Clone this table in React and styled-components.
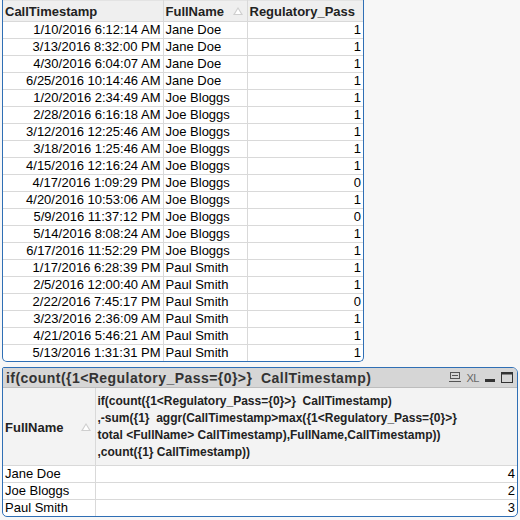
import React from 'react';
import styled, { createGlobalStyle } from 'styled-components';

const GlobalStyle = createGlobalStyle`
  html, body {
    margin: 0;
    padding: 0;
    background: #f7f7f7;
  }
  body {
    font-family: 'Liberation Sans', Arial, sans-serif;
    font-size: 13px;
    color: #000;
  }
`;

const rows = [
  ['1/10/2016 6:12:14 AM', 'Jane Doe', 1],
  ['3/13/2016 8:32:00 PM', 'Jane Doe', 1],
  ['4/30/2016 6:04:07 AM', 'Jane Doe', 1],
  ['6/25/2016 10:14:46 AM', 'Jane Doe', 1],
  ['1/20/2016 2:34:49 AM', 'Joe Bloggs', 1],
  ['2/28/2016 6:16:18 AM', 'Joe Bloggs', 1],
  ['3/12/2016 12:25:46 AM', 'Joe Bloggs', 1],
  ['3/18/2016 1:25:46 AM', 'Joe Bloggs', 1],
  ['4/15/2016 12:16:24 AM', 'Joe Bloggs', 1],
  ['4/17/2016 1:09:29 PM', 'Joe Bloggs', 0],
  ['4/20/2016 10:53:06 AM', 'Joe Bloggs', 1],
  ['5/9/2016 11:37:12 PM', 'Joe Bloggs', 0],
  ['5/14/2016 8:08:24 AM', 'Joe Bloggs', 1],
  ['6/17/2016 11:52:29 PM', 'Joe Bloggs', 1],
  ['1/17/2016 6:28:39 PM', 'Paul Smith', 1],
  ['2/5/2016 12:00:40 AM', 'Paul Smith', 1],
  ['2/22/2016 7:45:17 PM', 'Paul Smith', 0],
  ['3/23/2016 2:36:09 AM', 'Paul Smith', 1],
  ['4/21/2016 5:46:21 AM', 'Paul Smith', 1],
  ['5/13/2016 1:31:31 PM', 'Paul Smith', 1],
];

const totals = [
  ['Jane Doe', 4],
  ['Joe Bloggs', 2],
  ['Paul Smith', 3],
];

const Page = styled.div`
  display: flex;
  flex-direction: column;
  align-items: flex-start;
  gap: 5px;
  padding-left: 2px;
`;

const TableBox = styled.div`
  width: ${p => p.width}px;
  background: #fff;
  border: 1px solid #2f6fb5;
  border-top: ${p => (p.open ? 'none' : '1px solid #2f6fb5')};
  border-radius: ${p => (p.open ? '0 0 5px 5px' : '2px 6px 5px 5px')};
  overflow: hidden;
  box-sizing: border-box;
`;

const Grid = styled.table`
  border-collapse: collapse;
  width: 100%;
  table-layout: fixed;
`;

const HeadCell = styled.th`
  position: relative;
  background: ${p => (p.tall ? '#f3f3f3' : '#efefef')};
  border: 1px solid #d9d9d9;
  border-top: ${p => (p.tall ? 'none' : '1px solid #e3e3e3')};
  border-left: none;
  font-weight: bold;
  font-size: ${p => (p.small ? 12 : 13)}px;
  line-height: 17px;
  text-align: left;
  vertical-align: middle;
  padding: ${p => (p.tall ? '5px 2px 4px 2px' : '1px 2px 0 2px')};
  height: ${p => (p.tall ? 62 : 19)}px;
  color: #222;
  &:last-child { border-right: none; }
`;

const SortMark = styled.span`
  position: absolute;
  right: 4px;
  top: 50%;
  margin-top: -4px;
  width: 0;
  height: 0;
  border-left: 5px solid transparent;
  border-right: 5px solid transparent;
  border-bottom: 8px solid #cfcfcf;
  &::after {
    content: '';
    position: absolute;
    left: -3px;
    top: 2px;
    border-left: 3px solid transparent;
    border-right: 3px solid transparent;
    border-bottom: 5px solid #fff;
  }
`;

const Cell = styled.td`
  border: 1px solid #d9d9d9;
  border-left: none;
  height: 16px;
  line-height: 16px;
  padding: 0 2px;
  white-space: nowrap;
  overflow: hidden;
  text-align: ${p => (p.right ? 'right' : 'left')};
  &:last-child { border-right: none; }
`;

const Row = styled.tr`
  &:last-child td { border-bottom: none; }
`;

const TitleBar = styled.div`
  display: flex;
  align-items: center;
  justify-content: space-between;
  height: 19px;
  padding: 0 4px 0 3px;
  background: #d6d6d6;
  border-bottom: 1px solid #bdbdbd;
`;

const Title = styled.span`
  font-family: 'Liberation Sans', Arial, sans-serif;
  font-size: 14px;
  font-weight: bold;
  color: #333;
  white-space: pre;
  letter-spacing: 0.45px;
`;

const Tools = styled.div`
  display: flex;
  align-items: center;
  gap: 6px;
  color: #555;
`;

const XL = styled.span`
  font-family: 'Liberation Sans', sans-serif;
  font-size: 11px;
  color: #666;
  letter-spacing: -0.5px;
`;

export default function App() {
  return (
    <>
      <GlobalStyle />
      <Page>
        <TableBox width={362} open>
          <Grid>
            <colgroup>
              <col style={{ width: 160 }} />
              <col style={{ width: 84 }} />
              <col />
            </colgroup>
            <thead>
              <tr>
                <HeadCell>CallTimestamp</HeadCell>
                <HeadCell>FullName<SortMark /></HeadCell>
                <HeadCell>Regulatory_Pass</HeadCell>
              </tr>
            </thead>
            <tbody>
              {rows.map((r, i) => (
                <Row key={i}>
                  <Cell right>{r[0]}</Cell>
                  <Cell>{r[1]}</Cell>
                  <Cell right>{r[2]}</Cell>
                </Row>
              ))}
            </tbody>
          </Grid>
        </TableBox>

        <TableBox width={516}>
          <TitleBar>
            <Title>{'if(count({1<Regulatory_Pass={0}>}  CallTimestamp)'}</Title>
            <Tools>
              <svg width="12" height="11" viewBox="0 0 12 11">
                <rect x="1.5" y="0.5" width="9" height="6" fill="none" stroke="#555" />
                <line x1="3" y1="3.5" x2="9" y2="3.5" stroke="#555" />
                <line x1="0" y1="9.5" x2="12" y2="9.5" stroke="#555" />
              </svg>
              <XL>XL</XL>
              <svg width="10" height="11" viewBox="0 0 10 11">
                <rect x="0" y="7" width="10" height="3" fill="#333" />
              </svg>
              <svg width="12" height="11" viewBox="0 0 12 11">
                <rect x="0.5" y="0.5" width="11" height="10" fill="none" stroke="#333" />
                <rect x="0.5" y="0.5" width="11" height="2" fill="#333" />
              </svg>
            </Tools>
          </TitleBar>
          <Grid>
            <colgroup>
              <col style={{ width: 92 }} />
              <col />
            </colgroup>
            <thead>
              <tr>
                <HeadCell tall>FullName<SortMark /></HeadCell>
                <HeadCell tall small>
                  if(count({'{'}1&lt;Regulatory_Pass={'{'}0{'}'}&gt;{'}'}&nbsp; CallTimestamp)<br />
                  ,-sum({'{'}1{'}'}&nbsp; aggr(CallTimestamp&gt;max({'{'}1&lt;Regulatory_Pass={'{'}0{'}'}&gt;{'}'}<br />
                  total &lt;FullName&gt; CallTimestamp),FullName,CallTimestamp))<br />
                  ,count({'{'}1{'}'} CallTimestamp))
                </HeadCell>
              </tr>
            </thead>
            <tbody>
              {totals.map((t, i) => (
                <Row key={i}>
                  <Cell>{t[0]}</Cell>
                  <Cell right>{t[1]}</Cell>
                </Row>
              ))}
            </tbody>
          </Grid>
        </TableBox>
      </Page>
    </>
  );
}
